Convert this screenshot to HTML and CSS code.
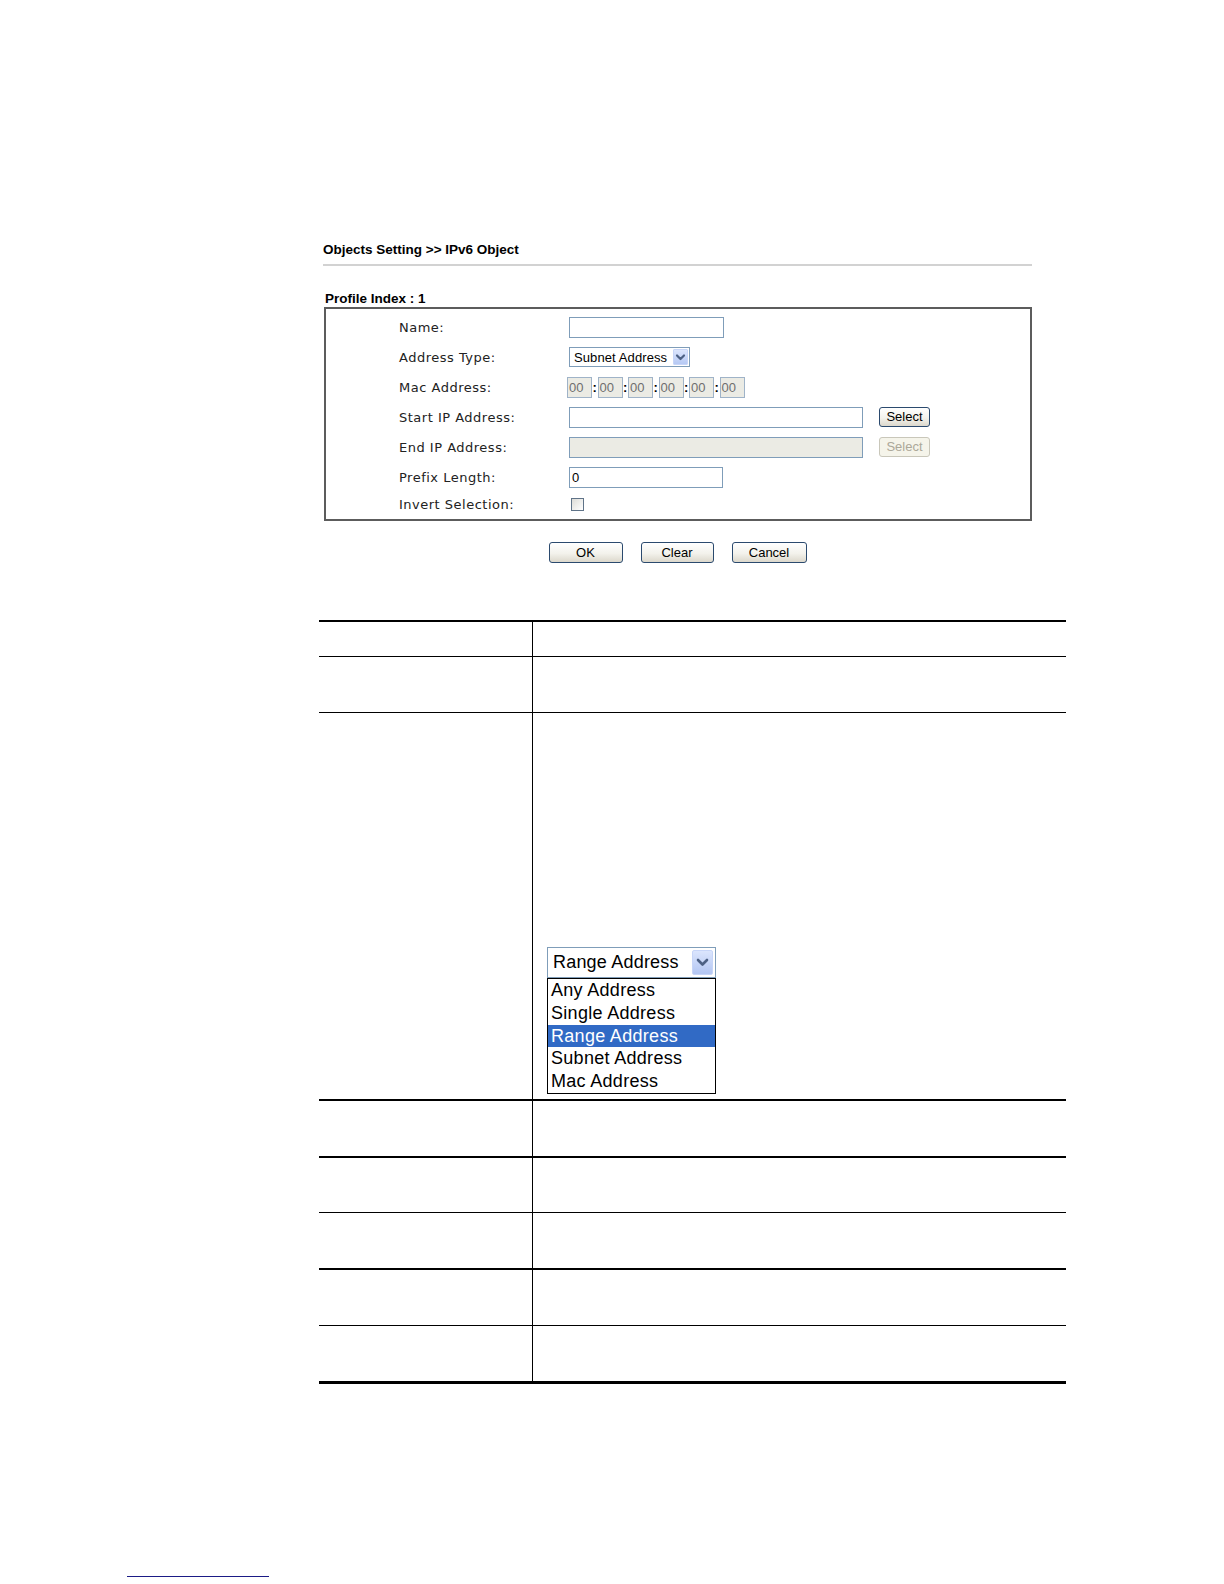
FILE: index.html
```html
<!DOCTYPE html>
<html>
<head>
<meta charset="utf-8">
<title>Objects Setting &gt;&gt; IPv6 Object</title>
<link rel="stylesheet" href="styles.css">
</head>
<body>
<div class="page">
  <div class="form-area">
    <div class="title">Objects Setting &gt;&gt; IPv6 Object</div>
    <div class="title-rule"></div>
    <div class="profile-label">Profile Index : 1</div>
    <div class="profile-box">
      <div class="row">
        <div class="label">Name:</div>
        <div class="field w-name"></div>
      </div>
      <div class="row">
        <div class="label">Address Type:</div>
        <div class="combo">
          <span class="combo-text">Subnet Address</span>
          <span class="combo-arrow">
            <svg width="15" height="16" viewBox="0 0 15 16"><path d="M4 6.5 L7.5 10 L11 6.5" fill="none" stroke="#4d6185" stroke-width="2.2" stroke-linecap="round" stroke-linejoin="round"/></svg>
          </span>
        </div>
      </div>
      <div class="row">
        <div class="label">Mac Address:</div>
        <div class="mac">
          <div class="mac-box">00</div><span class="colon">:</span>
          <div class="mac-box">00</div><span class="colon">:</span>
          <div class="mac-box">00</div><span class="colon">:</span>
          <div class="mac-box">00</div><span class="colon">:</span>
          <div class="mac-box">00</div><span class="colon">:</span>
          <div class="mac-box">00</div>
        </div>
      </div>
      <div class="row">
        <div class="label">Start IP Address:</div>
        <div class="field w-ip"></div>
        <div class="btn btn-select">Select</div>
      </div>
      <div class="row">
        <div class="label">End IP Address:</div>
        <div class="field w-ip disabled"></div>
        <div class="btn btn-select btn-disabled">Select</div>
      </div>
      <div class="row">
        <div class="label">Prefix Length:</div>
        <div class="field w-prefix">0</div>
      </div>
      <div class="row last">
        <div class="label">Invert Selection:</div>
        <span class="checkbox"></span>
      </div>
    </div>
    <div class="actions">
      <div class="btn btn-ok">OK</div>
      <div class="btn btn-clear">Clear</div>
      <div class="btn btn-cancel">Cancel</div>
    </div>
  </div>

  <div class="desc-table">
    <div class="trow r-head"><div class="c1"></div><div class="c2"></div></div>
    <div class="trow r-56"><div class="c1"></div><div class="c2"></div></div>
    <div class="trow r-big thick"><div class="c1"></div>
      <div class="c2 dd-cell">
        <div class="dd">
          <div class="dd-select">
            <span class="dd-text">Range Address</span>
            <span class="dd-arrow">
              <svg width="21" height="25" viewBox="0 0 21 25"><path d="M6 10 L10.5 14.5 L15 10" fill="none" stroke="#4d6185" stroke-width="2.6" stroke-linecap="round" stroke-linejoin="round"/></svg>
            </span>
          </div>
          <div class="dd-list">
            <div class="dd-item">Any Address</div>
            <div class="dd-item">Single Address</div>
            <div class="dd-item selected">Range Address</div>
            <div class="dd-item">Subnet Address</div>
            <div class="dd-item">Mac Address</div>
          </div>
        </div>
      </div>
    </div>
    <div class="trow r-57 thick"><div class="c1"></div><div class="c2"></div></div>
    <div class="trow r-55"><div class="c1"></div><div class="c2"></div></div>
    <div class="trow r-57 thick"><div class="c1"></div><div class="c2"></div></div>
    <div class="trow r-56"><div class="c1"></div><div class="c2"></div></div>
    <div class="trow r-58 bottom"><div class="c1"></div><div class="c2"></div></div>
  </div>

  <div class="footnote-rule"></div>
</div>
</body>
</html>
```
FILE: styles.css
```css
* { box-sizing: border-box; }
html, body { margin: 0; padding: 0; background: #fff; }
body { font-family: "Liberation Sans", Arial, sans-serif; color: #000; }

.page { padding-top: 242px; }

.form-area { margin-left: 323px; width: 709px; }

.title {
  font-weight: bold;
  font-size: 13.5px;
  line-height: 16px;
  height: 16px;
  white-space: nowrap;
}
.title-rule { margin-top: 6px; border-top: 2px solid #d2d2d2; }

.profile-label {
  margin-top: 25px;
  margin-left: 2px;
  font-weight: bold;
  font-size: 13.5px;
  line-height: 16px;
  height: 16px;
}

.profile-box {
  margin-top: 0;
  margin-left: 1px;
  border: 2px solid #5c5c5c;
  padding: 3px 0;
}

.row { display: flex; align-items: center; height: 30px; }
.row.last { height: 24px; }

.label {
  width: 243px;
  flex: none;
  padding-left: 73px;
  font-family: "DejaVu Sans", Verdana, sans-serif;
  font-size: 13px;
  letter-spacing: 0.5px;
  color: #222;
  white-space: nowrap;
}

.field {
  height: 21px;
  border: 1px solid #7f9db9;
  background: #fff;
  font-size: 13px;
  line-height: 19px;
  padding-left: 2px;
}
.w-name { width: 155px; }
.w-ip { width: 294px; }
.w-prefix { width: 154px; }
.field.disabled { background: #ebebe4; }

.combo {
  width: 121px;
  height: 20px;
  border: 1px solid #7f9db9;
  display: flex;
  align-items: center;
  justify-content: space-between;
  padding-left: 4px;
  padding-right: 1px;
  font-size: 13px;
  letter-spacing: 0.1px;
  background: #fff;
}
.combo-arrow {
  width: 15px;
  height: 16px;
  display: flex;
  border: 1px solid #c7d5f8;
  border-radius: 1px;
  background: linear-gradient(#dbe5fd, #b6c9f4);
}
.combo-arrow svg { margin: -1px; }

.mac { display: flex; align-items: center; margin-left: -2px; }
.mac-box {
  width: 25px;
  height: 21px;
  border: 1px solid #9fb3c8;
  background: #ebebe4;
  color: #6f6f6f;
  font-size: 13px;
  line-height: 19px;
  padding-left: 1px;
}
.colon { width: 5.5px; text-align: center; font-size: 13px; font-weight: bold; }

.btn {
  height: 21px;
  border: 1px solid #2b4a6e;
  border-radius: 3px;
  background: linear-gradient(#ffffff, #f3f2ec 55%, #dcd8cc);
  font-size: 13px;
  line-height: 19px;
  text-align: center;
  color: #000;
}
.btn-select { width: 51px; height: 20px; line-height: 18px; margin-left: 16px; }
.btn-disabled {
  border-color: #c9c7ba;
  color: #aca899;
  background: #f5f4ea;
}

.checkbox {
  width: 13px;
  height: 13px;
  margin-left: 2px;
  border: 1px solid #5f7388;
  background: linear-gradient(135deg, #dcdcd7, #ffffff);
}

.actions {
  display: flex;
  justify-content: center;
  gap: 18px;
  margin-top: 21px;
}
.btn-ok { width: 74px; }
.btn-clear { width: 73px; }
.btn-cancel { width: 75px; }

/* description table */
.desc-table {
  margin-top: 57px;
  margin-left: 319px;
  width: 747px;
  border-top: 2px solid #000;
}
.trow {
  display: grid;
  grid-template-columns: 214px 1fr;
  border-bottom: 1px solid #000;
}
.trow > .c1 { border-right: 1px solid #000; }
.trow.thick { border-bottom-width: 2px; }
.trow.bottom { border-bottom-width: 3px; }
.r-head { height: 35px; }
.r-55 { height: 55px; }
.r-56 { height: 56px; }
.r-57 { height: 57px; }
.r-58 { height: 58px; }
.r-big { height: 388px; }

.dd-cell {
  display: flex;
  flex-direction: column;
  justify-content: flex-end;
  padding: 0 0 5px 14px;
}
.dd { width: 169px; }
.dd-select {
  height: 31px;
  border: 1px solid #7f9db9;
  display: flex;
  align-items: center;
  justify-content: space-between;
  padding-left: 5px;
  padding-right: 2px;
  font-size: 18px;
  letter-spacing: 0.2px;
  background: #fff;
}
.dd-arrow {
  width: 21px;
  height: 25px;
  display: flex;
  border: 1px solid #c7d5f8;
  border-radius: 2px;
  background: linear-gradient(#dbe5fd, #b3c6f3);
}
.dd-arrow svg { margin: -1px; }
.dd-list {
  border: 1px solid #000;
  background: #fff;
  padding: 0;
}
.dd-item {
  font-size: 18px;
  letter-spacing: 0.3px;
  line-height: 22.8px;
  height: 22.8px;
  padding-left: 3px;
  white-space: nowrap;
}
.dd-item.selected { background: #316ac5; color: #fff; }

.footnote-rule {
  margin-top: 192px;
  margin-left: 127px;
  width: 142px;
  border-top: 1px solid #1b1b86;
}
```
